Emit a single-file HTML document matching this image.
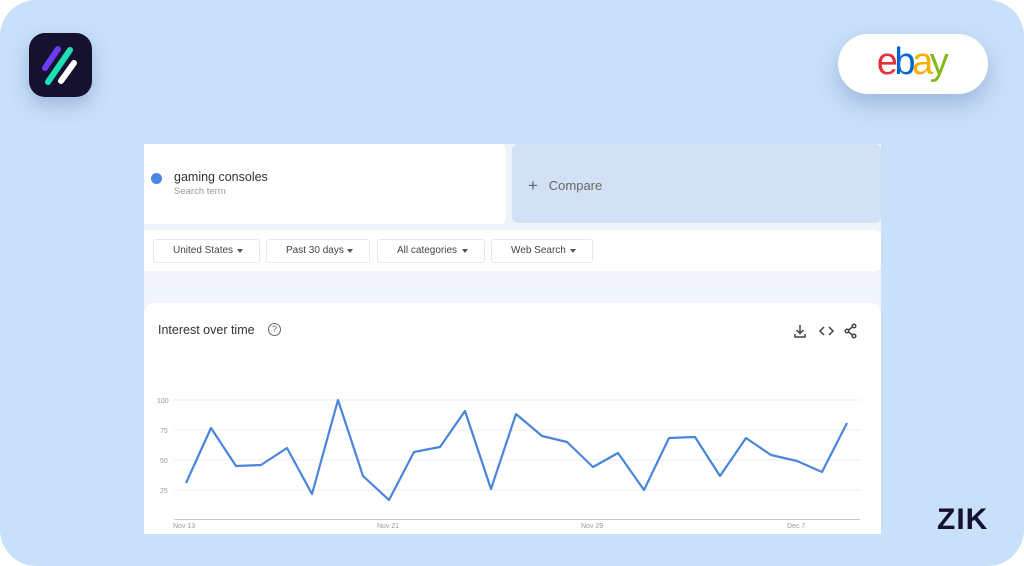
<!DOCTYPE html>
<html><head><meta charset="utf-8"><style>
*{margin:0;padding:0;box-sizing:border-box}
body{width:1024px;height:566px;background:#fff;position:relative;overflow:hidden;font-family:"Liberation Sans",sans-serif}
.bg{position:absolute;left:0;top:0;width:1024px;height:566px;background:#c8e0fa;border-radius:36px}
.logo{position:absolute;left:29px;top:33px;width:63px;height:64px;border-radius:16px;background:#15112e;box-shadow:0 8px 18px rgba(80,110,160,.35)}
.ebay{position:absolute;left:838px;top:34px;width:150px;height:60px;border-radius:30px;background:#fff;box-shadow:0 10px 22px rgba(80,110,160,.35);text-align:center;font-size:38px;line-height:56px;letter-spacing:-3.5px;padding-right:4px}
.panel{position:absolute;left:144px;top:144px;width:737px;height:390px;background:linear-gradient(#eef2fa,#f3f6fc)}
.term{position:absolute;left:144px;top:144px;width:362px;height:80px;background:#fff;border-radius:0 6px 6px 0}
.cmp{position:absolute;left:512px;top:144px;width:369px;height:79px;background:#d2e1f4;border-radius:6px}
.bar{position:absolute;left:144px;top:230px;width:737px;height:41px;background:#fff;border-radius:0 6px 6px 0}
.pill{position:absolute;top:239px;height:24px;border:1px solid #e6e8ec;border-radius:3px;font-size:10px;color:#444;line-height:22px;padding-left:19px;background:#fff}
.pill:after{content:"";position:absolute;right:16px;top:9px;border:3.5px solid transparent;border-top:4px solid #555}
.chart{position:absolute;left:144px;top:303px;width:737px;height:231px;background:#fff;border-radius:10px 10px 0 0}
.zik{position:absolute;left:937px;top:503px;font-size:30px;font-weight:bold;color:#15112e;letter-spacing:1px}
</style></head><body>
<div class="bg"></div>
<div class="logo"><svg width="63" height="64" viewBox="0 0 63 64">
<line x1="16" y1="35" x2="29" y2="16" stroke="#6a3cf2" stroke-width="6" stroke-linecap="round"/>
<line x1="19" y1="49" x2="41" y2="17" stroke="#1fe0b5" stroke-width="6" stroke-linecap="round"/>
<line x1="32" y1="48" x2="45" y2="30" stroke="#fff" stroke-width="6" stroke-linecap="round"/>
</svg></div>
<div class="ebay"><span style="color:#e53238">e</span><span style="color:#0064d2">b</span><span style="color:#f5af02">a</span><span style="color:#86b817">y</span></div>
<div class="panel"></div>
<div class="term">
<div style="position:absolute;left:7px;top:29px;width:11px;height:11px;border-radius:50%;background:#4a85e8"></div>
<div style="position:absolute;left:30px;top:26px;font-size:12.5px;color:#333">gaming consoles</div>
<div style="position:absolute;left:30px;top:42px;font-size:9.5px;color:#999">Search term</div>
</div>
<div class="cmp"><div style="position:absolute;left:16px;top:31px;font-size:13px;color:#666"><span style="font-size:17px;position:relative;top:1px">+</span>&nbsp;&nbsp; Compare</div></div>
<div class="bar"></div>
<div class="pill" style="left:153px;width:107px">United States</div>
<div class="pill" style="left:266px;width:104px">Past 30 days</div>
<div class="pill" style="left:377px;width:108px">All categories</div>
<div class="pill" style="left:491px;width:102px">Web Search</div>
<div class="chart">
<div style="position:absolute;left:14px;top:20px;font-size:12.5px;color:#333">Interest over time</div>
<div style="position:absolute;left:124px;top:20px;width:13px;height:13px;border:1.3px solid #666;border-radius:50%;font-size:9px;text-align:center;line-height:11px;color:#666">?</div>
<svg style="position:absolute;left:648px;top:20px" width="70" height="16" viewBox="0 0 70 16" fill="none" stroke="#444" stroke-width="1.5">
<path d="M8 2v8M4.5 7l3.5 3.5 3.5-3.5M3 11v3h10v-3"/>
<path d="M32 4l-4 4 4 4M37 4l4 4-4 4"/>
<circle cx="62" cy="3" r="1.8"/><circle cx="55" cy="8" r="1.8"/><circle cx="62" cy="13" r="1.8"/><path d="M60.5 4l-4 3M56.5 9l4 3"/>
</svg>
</div>
<svg style="position:absolute;left:0;top:0" width="1024" height="566">
<g stroke="#eee" stroke-width="1"><line x1="174" y1="400" x2="860" y2="400"/><line x1="174" y1="430" x2="860" y2="430"/><line x1="174" y1="460" x2="860" y2="460"/><line x1="174" y1="490" x2="860" y2="490"/></g>
<line x1="174" y1="519.5" x2="860" y2="519.5" stroke="#ccc"/>
<g font-size="7" fill="#999" font-family="Liberation Sans"><text x="157" y="403">100</text><text x="160" y="433">75</text><text x="160" y="463">50</text><text x="160" y="493">25</text>
<text x="173" y="528">Nov 13</text><text x="377" y="528">Nov 21</text><text x="581" y="528">Nov 29</text><text x="787" y="528">Dec 7</text></g>
<polyline fill="none" stroke="#4a85dc" stroke-width="2.2" stroke-linejoin="round" points="186,483 211,428 236,466 261,465 287,448 312,494 338,400 363,476 389,500 414,452 440,447 465,411 491,489 516,414 542,436 567,442 593,467 618,453 644,490 669,438 695,437 720,476 746,438 771,455 797,461 822,472 847,423"/>
</svg>
<div class="zik">ZIK</div>
</body></html>
